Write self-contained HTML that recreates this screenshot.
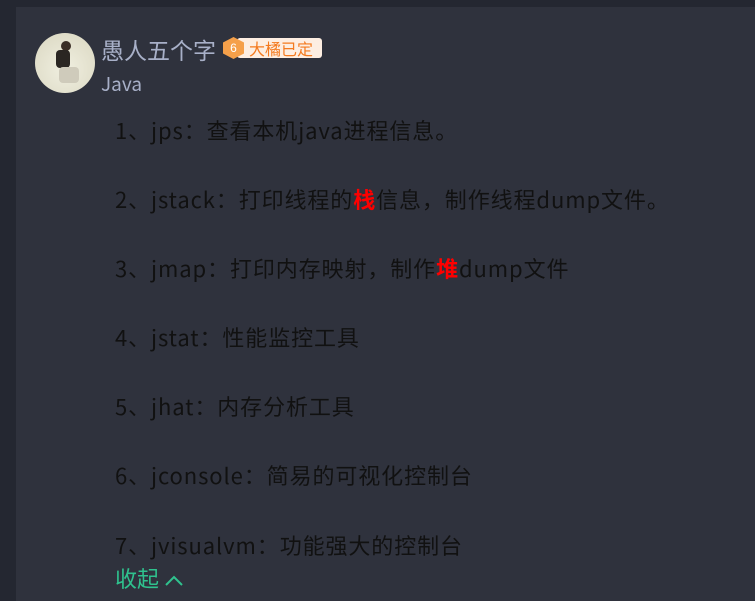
<!DOCTYPE html>
<html><head><meta charset="utf-8"><style>
html,body{margin:0;padding:0;width:755px;height:601px;overflow:hidden;background:#242731;}
.card{position:absolute;left:16px;top:7px;width:739px;height:594px;background:#2f323d;}
.av{position:absolute;left:35px;top:33px;width:60px;height:60px;border-radius:50%;background:radial-gradient(circle at 50% 60%,#f0efe0,#d9d6c0);overflow:hidden;}
.av .h{position:absolute;left:26px;top:8px;width:10px;height:10px;border-radius:50%;background:#3a2e25;}
.av .b{position:absolute;left:21px;top:17px;width:14px;height:18px;background:#2a2622;border-radius:4px;}
.av .l{position:absolute;left:24px;top:34px;width:20px;height:16px;background:#cfcbbb;border-radius:4px;}
.name{position:absolute;left:101px;top:34px;font:23px "Noto Sans CJK SC",sans-serif;line-height:30px;color:#a8b0c8;}
.badge{position:absolute;left:223px;top:37px;height:22px;}
.hex{position:absolute;left:0;top:0;width:21px;height:22px;background:#f5a04a;clip-path:polygon(50% 0,100% 25%,100% 75%,50% 100%,0 75%,0 25%);color:#fff;font:12px "Liberation Sans",sans-serif;text-align:center;line-height:22px;}
.bt{position:absolute;left:14px;top:1px;height:20px;width:85px;background:#fdeee2;border-radius:3px;color:#f47a1f;font:16px "Noto Sans CJK SC",sans-serif;line-height:20px;padding-left:12px;box-sizing:border-box;}
.java{position:absolute;left:101px;top:71px;font:19px "Noto Sans CJK SC",sans-serif;line-height:26px;color:#a8b0c8;}
.ln{position:absolute;left:115px;font:22px "Noto Sans CJK SC",sans-serif;letter-spacing:0.9px;line-height:26px;color:#111;white-space:nowrap;}
.r{color:#f00;font-weight:bold;}
.fold{position:absolute;left:115px;top:565px;font:22px "Noto Sans CJK SC",sans-serif;line-height:26px;color:#2fc28e;}
</style></head><body>
<div class="card"></div>
<div class="av"><div class="h"></div><div class="b"></div><div class="l"></div></div>
<div class="name">愚人五个字</div>
<div class="badge"><div class="bt">大橘已定</div><div class="hex">6</div></div>
<div class="java">Java</div>
<div class="ln" style="top:117px">1、jps：查看本机java进程信息。</div>
<div class="ln" style="top:186px">2、jstack：打印线程的<span class="r">栈</span>信息，制作线程dump文件。</div>
<div class="ln" style="top:255px">3、jmap：打印内存映射，制作<span class="r">堆</span>dump文件</div>
<div class="ln" style="top:324px">4、jstat：性能监控工具</div>
<div class="ln" style="top:393px">5、jhat：内存分析工具</div>
<div class="ln" style="top:462px">6、jconsole：简易的可视化控制台</div>
<div class="ln" style="top:532px">7、jvisualvm：功能强大的控制台</div>
<div class="fold">收起 <svg width="20" height="14" viewBox="0 0 20 14" style="vertical-align:0px"><path d="M2 12L10 4L18 12" fill="none" stroke="#2fc28e" stroke-width="2"/></svg></div>
</body></html>
